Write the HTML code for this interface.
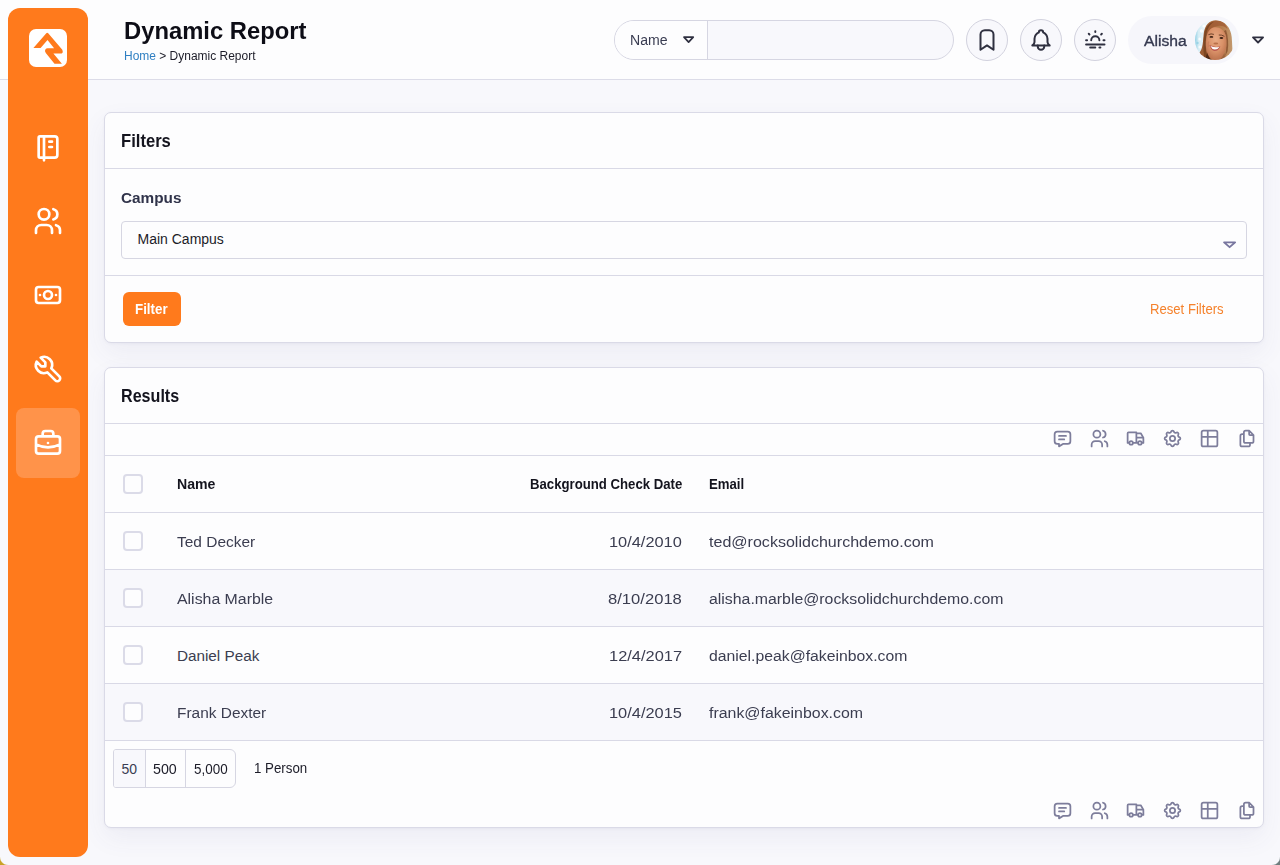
<!DOCTYPE html>
<html lang="en">
<head>
<meta charset="utf-8">
<title>Dynamic Report</title>
<style>
*{box-sizing:border-box;margin:0;padding:0}
html,body{width:1280px;height:865px;overflow:hidden}
body{background:#f8f8fc;font-family:"Liberation Sans",sans-serif;color:#2b2b3a;position:relative}
.abs{position:absolute}
.t{position:absolute;white-space:nowrap;line-height:1;transform-origin:0 50%}
/* sidebar */
#side{left:8px;top:8px;width:80px;height:849px;background:#ff7a1c;border-radius:12px}
#logo{left:29px;top:29px;width:38px;height:38px;background:#fff;border-radius:7px}
#active{left:16px;top:408px;width:64px;height:70px;background:#ff934a;border-radius:8px}
.si{position:absolute;left:32px;width:32px;height:32px}
.si svg{width:32px;height:32px;fill:none;stroke:#fff;stroke-width:2;stroke-linecap:round;stroke-linejoin:round}
/* header */
#head{left:0;top:0;width:1280px;height:79px;background:#fdfdfe}
#headline{left:0;top:79px;width:1280px;height:1px;background:#dcdce8}
#search{left:614px;top:20px;width:340px;height:40px;border:1px solid #d6d6e2;border-radius:20px;background:#f8f8fc;overflow:hidden}
#search .l{position:absolute;left:0;top:0;width:93px;height:38px;background:#fdfdfe;border-right:1px solid #d6d6e2}
.circ{position:absolute;top:19px;width:42px;height:42px;border:1px solid #d2d2de;border-radius:21px;background:#f8f8fc}
.circ svg{position:absolute;left:6.600px;top:6.600px;width:26px;height:26px;fill:none;stroke:#2f3040;stroke-width:1.850;stroke-linecap:round;stroke-linejoin:round}
#user{left:1128px;top:16px;width:111px;height:48px;border-radius:24px;background:#f6f6fb}
/* panels */
.panel{position:absolute;left:104px;width:1160px;background:#fdfdfe;border:1px solid #dadae7;border-radius:7px;box-shadow:0 10px 26px rgba(70,70,130,.068),0 1px 3px rgba(70,70,130,.05)}
.hl{position:absolute;left:105px;width:1158px;height:1px;background:#d9d9e6}
.stripe{position:absolute;left:105px;width:1158px;height:56px;background:#f8f8fc}
.cb{position:absolute;left:123px;width:20px;height:20px;border:2px solid #dbdbe8;border-radius:4px;background:#fdfdfe}
.ti{position:absolute;width:21px;height:21px}
.ti svg{display:block;width:21px;height:21px;fill:none;stroke:#7d7d9b;stroke-width:2;stroke-linecap:round;stroke-linejoin:round}
</style>
</head>
<body>
<!-- header -->
<div id="head" class="abs"></div>
<div id="headline" class="abs"></div>

<div id="search" class="abs"><div class="l"></div></div>
<svg class="abs" style="left:683px;top:36px" width="12" height="8" viewBox="0 0 12 8"><path d="M1 1.100H10.250L5.620 6.050z" fill="none" stroke="#2f3040" stroke-width="1.700" stroke-linejoin="round"/></svg>

<div class="circ" style="left:966px"><svg viewBox="0 0 24 24"><path d="M18 7v14l-6-4l-6 4V7a4 4 0 0 1 4-4h4a4 4 0 0 1 4 4z"/></svg></div>
<div class="circ" style="left:1020px"><svg viewBox="0 0 24 24"><path d="M10 5a2 2 0 1 1 4 0a7 7 0 0 1 4 6v3a4 4 0 0 0 2 3H4a4 4 0 0 0 2-3v-3a7 7 0 0 1 4-6"/><path d="M9 17v1a3 3 0 0 0 6 0v-1"/></svg></div>
<div class="circ" style="left:1074px"><svg viewBox="0 0 24 24" style="left:7.700px;top:7.250px;width:24.600px;height:24.600px;stroke-width:1.900"><path d="M3 13h1M20 13h1M5.600 6.600l.700.700M18.400 6.600l-.700.700M8 13a4 4 0 1 1 8 0M3 17h18M7 20h5M16 20h1M12 5V4"/></svg></div>

<div id="user" class="abs"></div>
<svg class="abs" id="avatar" style="left:1194.700px;top:20px" width="40" height="40" viewBox="0 0 40 40">
<defs><clipPath id="ac"><circle cx="20" cy="20" r="20"/></clipPath>
<filter id="ab" x="-10%" y="-10%" width="120%" height="120%"><feGaussianBlur stdDeviation="0.600"/></filter>
<linearGradient id="bgl" x1="0" x2="1"><stop offset="0" stop-color="#2f9fca"/><stop offset="0.050" stop-color="#86cbe2"/><stop offset="0.140" stop-color="#d5ecf4"/><stop offset="0.300" stop-color="#eef6fa"/><stop offset="1" stop-color="#f5f8fc"/></linearGradient>
<linearGradient id="hair" x1="0" x2="1"><stop offset="0" stop-color="#94552f"/><stop offset="0.400" stop-color="#a9683b"/><stop offset="0.750" stop-color="#b98353"/><stop offset="1" stop-color="#c39a70"/></linearGradient>
<radialGradient id="skin" cx="48%" cy="36%" r="64%"><stop offset="0" stop-color="#e8aa84"/><stop offset="0.550" stop-color="#da9269"/><stop offset="1" stop-color="#b96f4b"/></radialGradient></defs>
<g clip-path="url(#ac)"><g filter="url(#ab)">
<rect x="-3" y="-3" width="46" height="46" fill="url(#bgl)"/>
<circle cx="6.500" cy="11" r="1.700" fill="#fff" opacity=".85"/><circle cx="4.800" cy="19" r="1.500" fill="#fff" opacity=".8"/><circle cx="9" cy="6" r="1.600" fill="#fff" opacity=".85"/><circle cx="5" cy="27" r="1.600" fill="#fff" opacity=".7"/><circle cx="2.500" cy="23" r="1.200" fill="#8fd0e4" opacity=".8"/>
<path d="M21 .200C14.500 0 10 5 8.800 13C7.800 21 8.300 28 4.300 33L2 43H38C37.600 33 37.200 24 36.700 17C36 8 30 .500 21 .200z" fill="url(#hair)"/>
<path d="M22 .600C27 .800 31 4 32.500 9C29 5.500 24 5 19 7C15.500 8.500 13 11.500 12 16C11 10 14 1.500 22 .600z" fill="#a05c34" opacity=".8"/>
<path d="M19.500 1.500C15.500 3.500 12.500 8 11.500 14C10.500 21 10.500 29 12 37L9.300 38C7.800 29 8.200 20 9.700 12C11 6.500 14.500 2.500 19.500 1.500z" fill="#74401f" opacity=".8"/>
<path d="M31 10C33.200 16 33.700 24 32.700 31L30 36.500C32 28 32 18 29 11z" fill="#83492a" opacity=".75"/>
<path d="M19 7.300C24 6.400 29 9 31 16C32 22 31.600 27.500 29.600 32.500C27.500 37.500 23.500 41 19.500 41C15.500 39 12.300 35 11.300 30C10.300 24 10.600 18 12.600 13C14 10 16 8 19 7.300z" fill="url(#skin)"/>
<path d="M12 32.500C14 38 17 41 20 42L10 42z" fill="#47220f" opacity=".9"/>
<path d="M29.500 33C27.500 37.500 24.500 40.500 21 42L31 42z" fill="#8a4f2e" opacity=".6"/>
<path d="M13.400 14.700Q16 13.200 18.900 14.400" stroke="#70422a" stroke-width="1" fill="none"/>
<path d="M23.800 15Q26.800 14.600 29.400 16.400" stroke="#70422a" stroke-width="1" fill="none"/>
<ellipse cx="16.400" cy="16.900" rx="1.900" ry=".900" fill="#3e2216"/>
<ellipse cx="26.400" cy="18" rx="1.900" ry=".900" fill="#3e2216"/>
<ellipse cx="20.800" cy="23.500" rx="2.400" ry=".900" fill="#a95f3b" opacity=".75"/>
<path d="M13.800 21.500Q12.500 24 13.500 27" stroke="#c47a56" stroke-width="1.200" fill="none" opacity=".6"/>
<path d="M14.400 25.100Q20 28 25.400 26.200Q23.400 31.200 19.600 31.100Q16 30.700 14.400 25.100z" fill="#b9584f"/>
<path d="M15.400 25.900Q20 28.200 24.500 26.700Q22.800 29.700 19.700 29.600Q17 29.300 15.400 25.900z" fill="#fffefd"/>
</g></g></svg>
<svg class="abs" style="left:1252px;top:35.500px" width="12" height="8" viewBox="0 0 12 8"><path d="M1 1.300H11.100L6.050 6.500z" fill="none" stroke="#2f3040" stroke-width="1.800" stroke-linejoin="round"/></svg>

<!-- sidebar -->
<div id="side" class="abs"></div>
<div id="logo" class="abs"><svg width="38" height="38" viewBox="0 0 38 38"><path d="M17.300 4.300Q18.200 3.200 19.200 4.300L33.300 20.700Q34.900 24.600 31.100 24.600L24.400 24.600L32.900 34.700L25.500 34.700L16.800 24Q15.200 21.800 16.500 20.200Q17.200 19.300 18.600 19.300L25.100 19.300L18.500 11.100L11.600 19.100L4.400 19.100Z" fill="#ff7a1c"/></svg></div>
<div id="active" class="abs"></div>
<div class="si" style="top:131px"><svg viewBox="0 0 24 24"><path d="M6 4h11a2 2 0 0 1 2 2v12a2 2 0 0 1-2 2H6a1 1 0 0 1-1-1V5a1 1 0 0 1 1-1m3 0v18M13 8h2M13 12h2"/></svg></div>
<div class="si" style="top:205px"><svg viewBox="0 0 24 24"><path d="M5 7a4 4 0 1 0 8 0a4 4 0 1 0-8 0M3 21v-2a4 4 0 0 1 4-4h4a4 4 0 0 1 4 4v2M16 3.130a4 4 0 0 1 0 7.750M21 21v-2a4 4 0 0 0-3-3.850"/></svg></div>
<div class="si" style="top:279px"><svg viewBox="0 0 24 24"><path d="M9 12a3 3 0 1 0 6 0a3 3 0 1 0-6 0M3 8a2 2 0 0 1 2-2h14a2 2 0 0 1 2 2v8a2 2 0 0 1-2 2H5a2 2 0 0 1-2-2zM18 12h.01M6 12h.01"/></svg></div>
<div class="si" style="top:353px"><svg viewBox="0 0 24 24"><path d="M7 10h3V7L6.500 3.500a6 6 0 0 1 8 8l6 6a2 2 0 0 1-3 3l-6-6a6 6 0 0 1-8-8L7 10"/></svg></div>
<div class="si" style="top:427px"><svg viewBox="0 0 24 24"><path d="M3 9a2 2 0 0 1 2-2h14a2 2 0 0 1 2 2v9a2 2 0 0 1-2 2H5a2 2 0 0 1-2-2zM8 7V5a2 2 0 0 1 2-2h4a2 2 0 0 1 2 2v2M12 12v.01M3 13a20 20 0 0 0 18 0"/></svg></div>

<!-- FILTERS panel -->
<div class="panel" style="top:112px;height:231px"></div>
<div class="hl" style="top:168px"></div>
<div class="abs" id="sel" style="left:121px;top:221px;width:1126px;height:38px;border:1px solid #d6d6e2;border-radius:4px;background:#fdfdfe"></div>
<svg class="abs" style="left:1223px;top:240.500px" width="14" height="9" viewBox="0 0 14 9"><path d="M1.100 1.350H12.100L6.600 6.150z" fill="none" stroke="#78769f" stroke-width="1.900" stroke-linejoin="round"/></svg>
<div class="hl" style="top:275px"></div>
<div class="abs" id="fbtn" style="left:123px;top:292px;width:58px;height:34px;border-radius:6px;background:#ff7a1c"></div>

<!-- RESULTS panel -->
<div class="panel" style="top:367px;height:461px"></div>
<div class="hl" style="top:423px"></div>
<div class="hl" style="top:455px"></div>
<div class="hl" style="top:512px"></div>
<div class="stripe" style="top:570px"></div>
<div class="stripe" style="top:684px"></div>
<div class="hl" style="top:569px"></div>
<div class="hl" style="top:626px"></div>
<div class="hl" style="top:683px"></div>
<div class="hl" style="top:740px"></div>

<div class="cb" style="top:474px"></div>
<div class="cb" style="top:531px"></div>
<div class="cb" style="top:588px"></div>
<div class="cb" style="top:645px"></div>
<div class="cb" style="top:702px"></div>





<!-- toolbar icons -->
<div class="ti" style="left:1051.5px;top:428.1px"><svg viewBox="0 0 24 24"><path d="M8 9h8M8 13h6M18 4a3 3 0 0 1 3 3v8a3 3 0 0 1-3 3h-5l-5 3v-3H6a3 3 0 0 1-3-3V7a3 3 0 0 1 3-3h12z"/></svg></div>
<div class="ti" style="left:1088.5px;top:428.1px"><svg viewBox="0 0 24 24"><path d="M5 7a4 4 0 1 0 8 0a4 4 0 1 0-8 0M3 21v-2a4 4 0 0 1 4-4h4a4 4 0 0 1 4 4v2M16 3.130a4 4 0 0 1 0 7.750M21 21v-2a4 4 0 0 0-3-3.850"/></svg></div>
<div class="ti" style="left:1125.0px;top:428.1px"><svg viewBox="0 0 24 24"><path d="M5 17a2 2 0 1 0 4 0a2 2 0 1 0-4 0M15 17a2 2 0 1 0 4 0a2 2 0 1 0-4 0M5 17H3V6a1 1 0 0 1 1-1h9v12m-4 0h6m4 0h2v-6h-8m0-5h5l3 5"/></svg></div>
<div class="ti" style="left:1161.5px;top:428.1px"><svg viewBox="0 0 24 24"><path d="M10.325 4.317c.426-1.756 2.924-1.756 3.350 0a1.724 1.724 0 0 0 2.573 1.066c1.543-.940 3.310.826 2.370 2.370a1.724 1.724 0 0 0 1.065 2.572c1.756.426 1.756 2.924 0 3.350a1.724 1.724 0 0 0-1.066 2.573c.940 1.543-.826 3.310-2.370 2.370a1.724 1.724 0 0 0-2.572 1.065c-.426 1.756-2.924 1.756-3.350 0a1.724 1.724 0 0 0-2.573-1.066c-1.543.940-3.310-.826-2.370-2.370a1.724 1.724 0 0 0-1.065-2.572c-1.756-.426-1.756-2.924 0-3.350a1.724 1.724 0 0 0 1.066-2.573c-.940-1.543.826-3.310 2.370-2.370c1 .608 2.296.070 2.572-1.065zM9 12a3 3 0 1 0 6 0a3 3 0 0 0-6 0"/></svg></div>
<div class="ti" style="left:1198.5px;top:428.1px"><svg viewBox="0 0 24 24"><path d="M3 5a2 2 0 0 1 2-2h14a2 2 0 0 1 2 2v14a2 2 0 0 1-2 2H5a2 2 0 0 1-2-2V5zM3 10h18M10 3v18"/></svg></div>
<div class="ti" style="left:1235.5px;top:428.1px"><svg viewBox="0 0 24 24"><path d="M15 3v4a1 1 0 0 0 1 1h4M18 17h-7a2 2 0 0 1-2-2V5a2 2 0 0 1 2-2h4l5 5v7a2 2 0 0 1-2 2zM16 17v2a2 2 0 0 1-2 2H7a2 2 0 0 1-2-2V9a2 2 0 0 1 2-2h2"/></svg></div>
<div class="ti" style="left:1051.5px;top:800.1px"><svg viewBox="0 0 24 24"><path d="M8 9h8M8 13h6M18 4a3 3 0 0 1 3 3v8a3 3 0 0 1-3 3h-5l-5 3v-3H6a3 3 0 0 1-3-3V7a3 3 0 0 1 3-3h12z"/></svg></div>
<div class="ti" style="left:1088.5px;top:800.1px"><svg viewBox="0 0 24 24"><path d="M5 7a4 4 0 1 0 8 0a4 4 0 1 0-8 0M3 21v-2a4 4 0 0 1 4-4h4a4 4 0 0 1 4 4v2M16 3.130a4 4 0 0 1 0 7.750M21 21v-2a4 4 0 0 0-3-3.850"/></svg></div>
<div class="ti" style="left:1125.0px;top:800.1px"><svg viewBox="0 0 24 24"><path d="M5 17a2 2 0 1 0 4 0a2 2 0 1 0-4 0M15 17a2 2 0 1 0 4 0a2 2 0 1 0-4 0M5 17H3V6a1 1 0 0 1 1-1h9v12m-4 0h6m4 0h2v-6h-8m0-5h5l3 5"/></svg></div>
<div class="ti" style="left:1161.5px;top:800.1px"><svg viewBox="0 0 24 24"><path d="M10.325 4.317c.426-1.756 2.924-1.756 3.350 0a1.724 1.724 0 0 0 2.573 1.066c1.543-.940 3.310.826 2.370 2.370a1.724 1.724 0 0 0 1.065 2.572c1.756.426 1.756 2.924 0 3.350a1.724 1.724 0 0 0-1.066 2.573c.940 1.543-.826 3.310-2.370 2.370a1.724 1.724 0 0 0-2.572 1.065c-.426 1.756-2.924 1.756-3.350 0a1.724 1.724 0 0 0-2.573-1.066c-1.543.940-3.310-.826-2.370-2.370a1.724 1.724 0 0 0-1.065-2.572c-1.756-.426-1.756-2.924 0-3.350a1.724 1.724 0 0 0 1.066-2.573c-.940-1.543.826-3.310 2.370-2.370c1 .608 2.296.070 2.572-1.065zM9 12a3 3 0 1 0 6 0a3 3 0 0 0-6 0"/></svg></div>
<div class="ti" style="left:1198.5px;top:800.1px"><svg viewBox="0 0 24 24"><path d="M3 5a2 2 0 0 1 2-2h14a2 2 0 0 1 2 2v14a2 2 0 0 1-2 2H5a2 2 0 0 1-2-2V5zM3 10h18M10 3v18"/></svg></div>
<div class="ti" style="left:1235.5px;top:800.1px"><svg viewBox="0 0 24 24"><path d="M15 3v4a1 1 0 0 0 1 1h4M18 17h-7a2 2 0 0 1-2-2V5a2 2 0 0 1 2-2h4l5 5v7a2 2 0 0 1-2 2zM16 17v2a2 2 0 0 1-2 2H7a2 2 0 0 1-2-2V9a2 2 0 0 1 2-2h2"/></svg></div>
<!-- pager -->
<div class="abs" id="pager" style="left:113px;top:749px;width:123px;height:39px;border:1px solid #d6d6e2;border-radius:3px 6px 6px 3px;background:#fdfdfe;overflow:hidden"><div style="position:absolute;left:0;top:0;width:32px;height:37px;background:#f8f8fc;border-right:1px solid #d6d6e2"></div><div style="position:absolute;left:71px;top:0;width:1px;height:37px;background:#d6d6e2"></div></div>
<div class="t" id="title" style="left:123.7px;top:19.91px;font-size:23.4px;font-weight:700;color:#0d0d16;transform:scaleX(1.017)">Dynamic Report</div>
<div class="t" id="crumb" style="left:124px;top:49.5px;font-size:12px;font-weight:400;color:#1c1c28;transform:scaleX(0.998)"><span style="color:#2f7fc2">Home</span> &gt; Dynamic Report</div>
<div class="t" id="sname" style="left:629.96px;top:32.7px;font-size:14px;font-weight:400;color:#3a3d52;transform:scaleX(1.007)">Name</div>
<div class="t" id="uname" style="left:1143.84px;top:33.43px;font-size:15.5px;font-weight:400;color:#34384f;transform:scaleX(1.012);-webkit-text-stroke:.350px #34384f">Alisha</div>
<div class="t" id="filters" style="left:120.76px;top:131.6px;font-size:18px;font-weight:700;color:#14141e;transform:scaleX(0.923)">Filters</div>
<div class="t" id="campus" style="left:120.93px;top:190.35px;font-size:15px;font-weight:700;color:#30334a;transform:scaleX(1.021)">Campus</div>
<div class="t" id="main" style="left:137.5px;top:231.85px;font-size:14px;font-weight:400;color:#1c1c28;transform:scaleX(1.000)">Main Campus</div>
<div class="t" id="fbtnt" style="left:135.19px;top:301.85px;font-size:14px;font-weight:700;color:#ffffff;transform:scaleX(0.952)">Filter</div>
<div class="t" id="reset" style="left:1150.2px;top:302px;font-size:14px;font-weight:400;color:#f5822c;transform:scaleX(0.937)">Reset Filters</div>
<div class="t" id="results" style="left:120.76px;top:386.7px;font-size:18px;font-weight:700;color:#14141e;transform:scaleX(0.895)">Results</div>
<div class="t" id="thname" style="left:176.67px;top:476.85px;font-size:14px;font-weight:700;color:#14141e;transform:scaleX(1.009)">Name</div>
<div class="t" id="thbcd" style="left:529.84px;top:476.85px;font-size:14px;font-weight:700;color:#14141e;transform:scaleX(0.941)">Background Check Date</div>
<div class="t" id="themail" style="left:708.79px;top:476.85px;font-size:14px;font-weight:700;color:#14141e;transform:scaleX(0.942)">Email</div>
<div class="t" id="n1" style="left:176.98px;top:533.89px;font-size:15.3px;font-weight:400;color:#3b3d50;transform:scaleX(1.011)">Ted Decker</div>
<div class="t" id="n2" style="left:177.37px;top:590.89px;font-size:15.3px;font-weight:400;color:#3b3d50;transform:scaleX(1.037)">Alisha Marble</div>
<div class="t" id="n3" style="left:176.9px;top:647.89px;font-size:15.3px;font-weight:400;color:#3b3d50;transform:scaleX(1.000)">Daniel Peak</div>
<div class="t" id="n4" style="left:176.59px;top:704.89px;font-size:15.3px;font-weight:400;color:#3b3d50;transform:scaleX(1.009)">Frank Dexter</div>
<div class="t" id="d1" style="left:608.72px;top:533.89px;font-size:15.3px;font-weight:400;color:#3b3d50;transform:scaleX(1.070)">10/4/2010</div>
<div class="t" id="d2" style="left:607.7px;top:590.89px;font-size:15.3px;font-weight:400;color:#3b3d50;transform:scaleX(1.085)">8/10/2018</div>
<div class="t" id="d3" style="left:608.64px;top:647.89px;font-size:15.3px;font-weight:400;color:#3b3d50;transform:scaleX(1.073)">12/4/2017</div>
<div class="t" id="d4" style="left:608.72px;top:704.89px;font-size:15.3px;font-weight:400;color:#3b3d50;transform:scaleX(1.072)">10/4/2015</div>
<div class="t" id="e1" style="left:709.34px;top:533.89px;font-size:15.3px;font-weight:400;color:#3b3d50;transform:scaleX(1.049)">ted@rocksolidchurchdemo.com</div>
<div class="t" id="e2" style="left:708.9px;top:590.89px;font-size:15.3px;font-weight:400;color:#3b3d50;transform:scaleX(1.036)">alisha.marble@rocksolidchurchdemo.com</div>
<div class="t" id="e3" style="left:708.77px;top:647.89px;font-size:15.3px;font-weight:400;color:#3b3d50;transform:scaleX(1.031)">daniel.peak@fakeinbox.com</div>
<div class="t" id="e4" style="left:709.15px;top:704.89px;font-size:15.3px;font-weight:400;color:#3b3d50;transform:scaleX(1.040)">frank@fakeinbox.com</div>
<div class="t" id="p50" style="left:121.4px;top:761.9px;font-size:14px;font-weight:400;color:#3a3d52;transform:scaleX(1.000)">50</div>
<div class="t" id="p500" style="left:153.44px;top:761.9px;font-size:14px;font-weight:400;color:#1c1c28;transform:scaleX(1.018)">500</div>
<div class="t" id="p5000" style="left:193.52px;top:761.9px;font-size:14px;font-weight:400;color:#1c1c28;transform:scaleX(0.959)">5,000</div>
<div class="t" id="person" style="left:254px;top:761.1px;font-size:14px;font-weight:400;color:#1c1c28;transform:scaleX(0.950)">1 Person</div>
<div class="abs" style="left:0;top:857px;width:8px;height:8px;background:radial-gradient(circle at 100% 0,rgba(201,162,39,0) 7.400px,#c9a227 8.600px)"></div>
<div class="abs" style="left:1272px;top:857px;width:8px;height:8px;background:radial-gradient(circle at 0 0,rgba(110,125,125,0) 7.400px,#6e7d7d 8.600px)"></div>
</body>
</html>
